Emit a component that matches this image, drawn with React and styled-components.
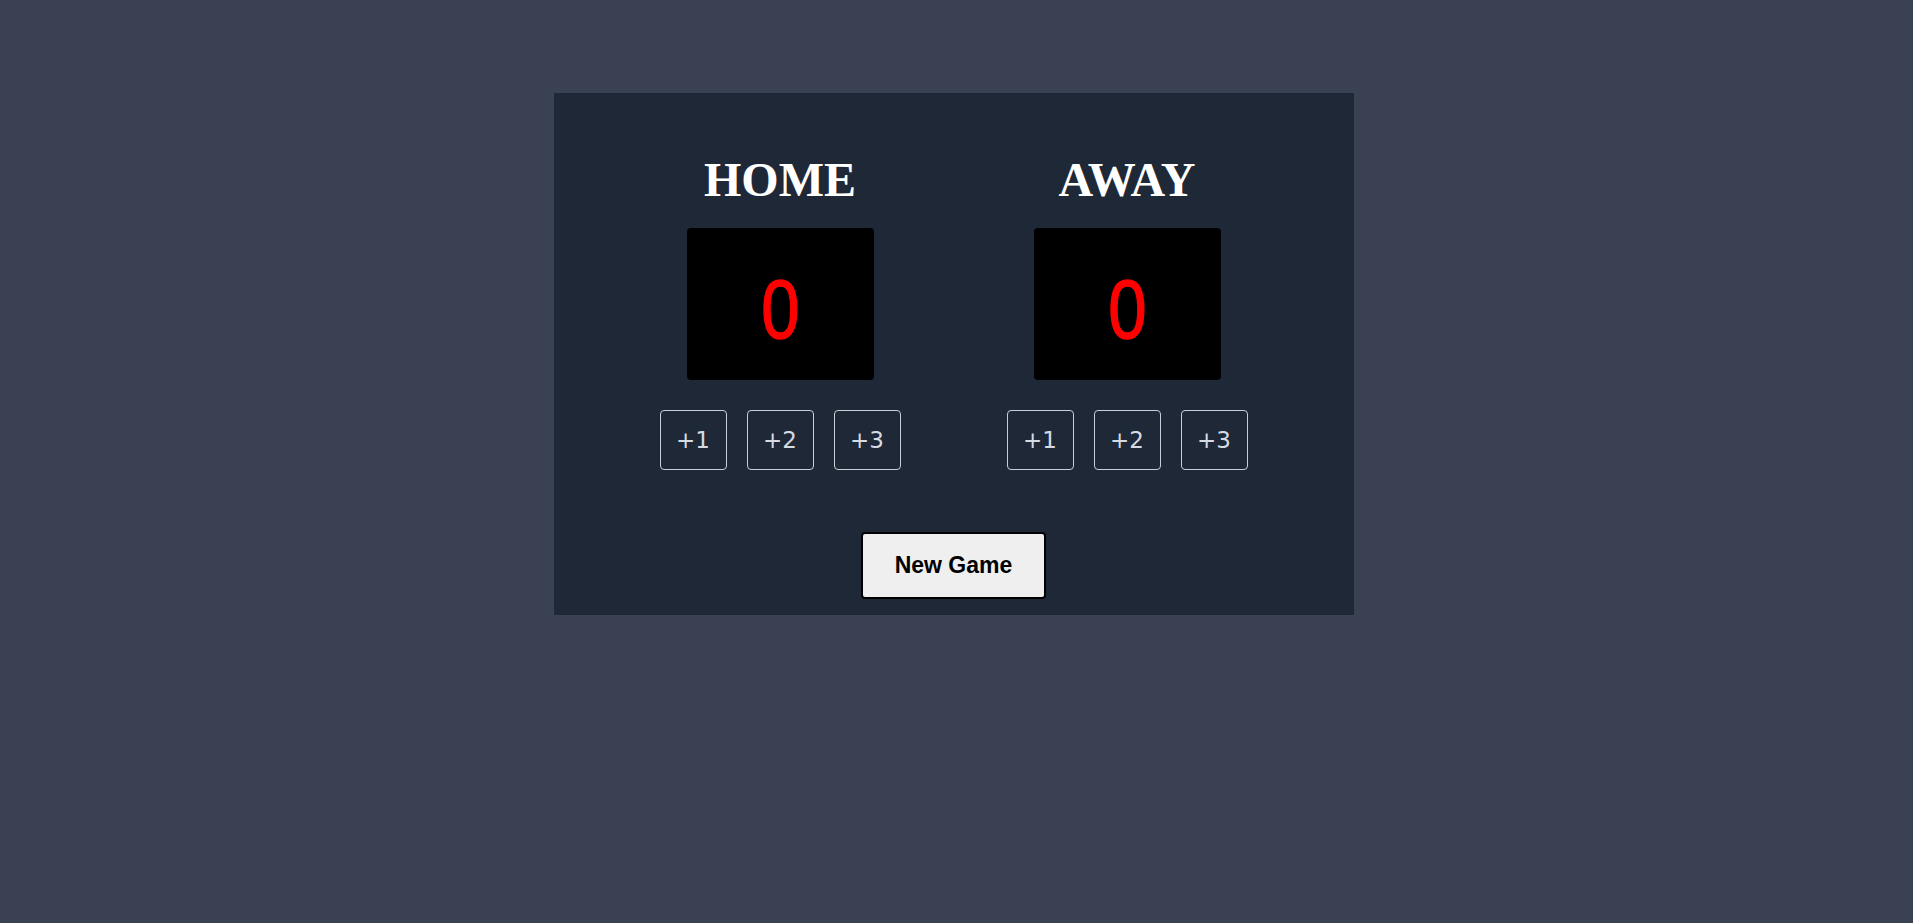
import React, { useState } from "react";
import styled, { createGlobalStyle } from "styled-components";

const GlobalStyle = createGlobalStyle`
  html, body {
    margin: 0;
    padding: 0;
  }
  body {
    min-height: 100vh;
    background: #394152;
    font-family: "Liberation Serif", serif;
  }
`;

const Panel = styled.div`
  width: 800px;
  margin: 93px auto 0;
  position: relative;
  left: -3px;
  background: #1f2837;
  padding: 59px 0 16px;
  box-sizing: border-box;
  display: flex;
  flex-direction: column;
  align-items: center;
`;

const Teams = styled.div`
  display: flex;
  justify-content: center;
  gap: 106px;
`;

const Team = styled.div`
  width: 241px;
  display: flex;
  flex-direction: column;
  align-items: center;
`;

const TeamName = styled.h1`
  margin: 0;
  font-family: "Liberation Serif", "Times New Roman", serif;
  font-size: 48px;
  font-weight: bold;
  line-height: 55px;
  color: #ffffff;
`;

const Score = styled.div`
  margin-top: 21px;
  width: 187px;
  height: 152px;
  background: #000000;
  border-radius: 4px;
  display: flex;
  align-items: center;
  justify-content: center;
`;

const Digits = styled.span`
  display: inline-block;
  padding-top: 9px;
  font-family: "Liberation Sans", Arial, sans-serif;
  font-size: 84px;
  line-height: 1;
  color: #ff0000;
  -webkit-text-stroke: 1.5px #ff0000;
  transform: scaleX(0.82);
`;

const Buttons = styled.div`
  margin-top: 30px;
  display: flex;
  gap: 20px;
`;

const PointButton = styled.button`
  width: 67px;
  height: 60px;
  padding: 0;
  background: transparent;
  border: 1px solid #c9ced6;
  border-radius: 4px;
  color: #d6dbe3;
  font-family: "DejaVu Sans", Verdana, sans-serif;
  font-size: 23px;
  cursor: pointer;
`;

const NewGame = styled.button`
  margin-top: 62px;
  width: 185px;
  height: 67px;
  background: #efefef;
  border: 2px solid #000000;
  border-radius: 4px;
  font-family: "Liberation Sans", Arial, sans-serif;
  font-weight: bold;
  font-size: 23px;
  color: #000000;
  cursor: pointer;
`;

const TeamBlock = ({ name, score, onAdd }) => (
  <Team>
    <TeamName>{name}</TeamName>
    <Score>
      <Digits>{score}</Digits>
    </Score>
    <Buttons>
      {[1, 2, 3].map(n => (
        <PointButton key={n} onClick={() => onAdd(n)}>
          +{n}
        </PointButton>
      ))}
    </Buttons>
  </Team>
);

export default function App() {
  const [home, setHome] = useState(0);
  const [away, setAway] = useState(0);

  return (
    <>
      <GlobalStyle />
      <Panel>
        <Teams>
          <TeamBlock name="HOME" score={home} onAdd={n => setHome(home + n)} />
          <TeamBlock name="AWAY" score={away} onAdd={n => setAway(away + n)} />
        </Teams>
        <NewGame
          onClick={() => {
            setHome(0);
            setAway(0);
          }}
        >
          New Game
        </NewGame>
      </Panel>
    </>
  );
}
